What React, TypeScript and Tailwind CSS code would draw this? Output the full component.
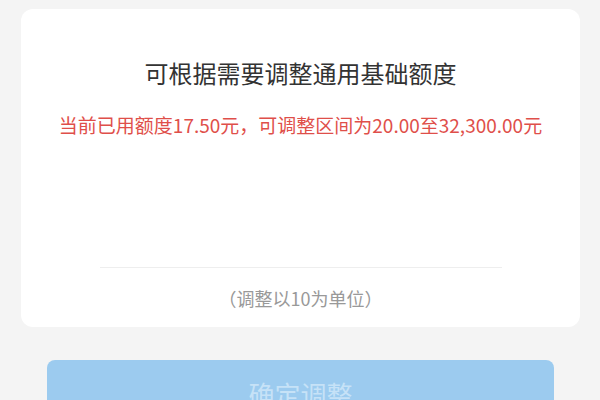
import React from 'react';

export default function App() {
  const font = { fontFamily: '"Noto Sans CJK SC", "Noto Sans", sans-serif' };

  return (
    <div className="h-[400px] w-[600px] overflow-hidden bg-[#f4f4f4]" style={font}>
      {/* Quota card */}
      <div className="mx-[21px] mt-[9px] w-[559px] rounded-[12px] bg-white pt-[48px] pb-[17px]">
        <h2 className="text-center text-[24px] leading-[32px] text-[#333333]">
          可根据需要调整通用基础额度
        </h2>
        <p className="mt-[23px] text-center text-[19px] leading-[26px] text-[#df4f4a]">
          当前已用额度17.50元，可调整区间为20.00至32,300.00元
        </p>

        {/* amount input area */}
        <div className="h-[129px]" />
        <div className="mx-auto h-px w-[402px] bg-[#eeeeee]" />

        <p className="mt-[18px] text-center text-[18px] leading-[24px] text-[#999999]">
          （调整以10为单位）
        </p>
      </div>

      {/* Confirm button */}
      <button
        disabled
        className="mx-[47px] mt-[33px] flex h-[66px] w-[507px] items-center justify-center rounded-[8px] bg-[#9ccbef] text-[26px] text-[#c6e2f7]"
      >
        确定调整
      </button>
    </div>
  );
}
